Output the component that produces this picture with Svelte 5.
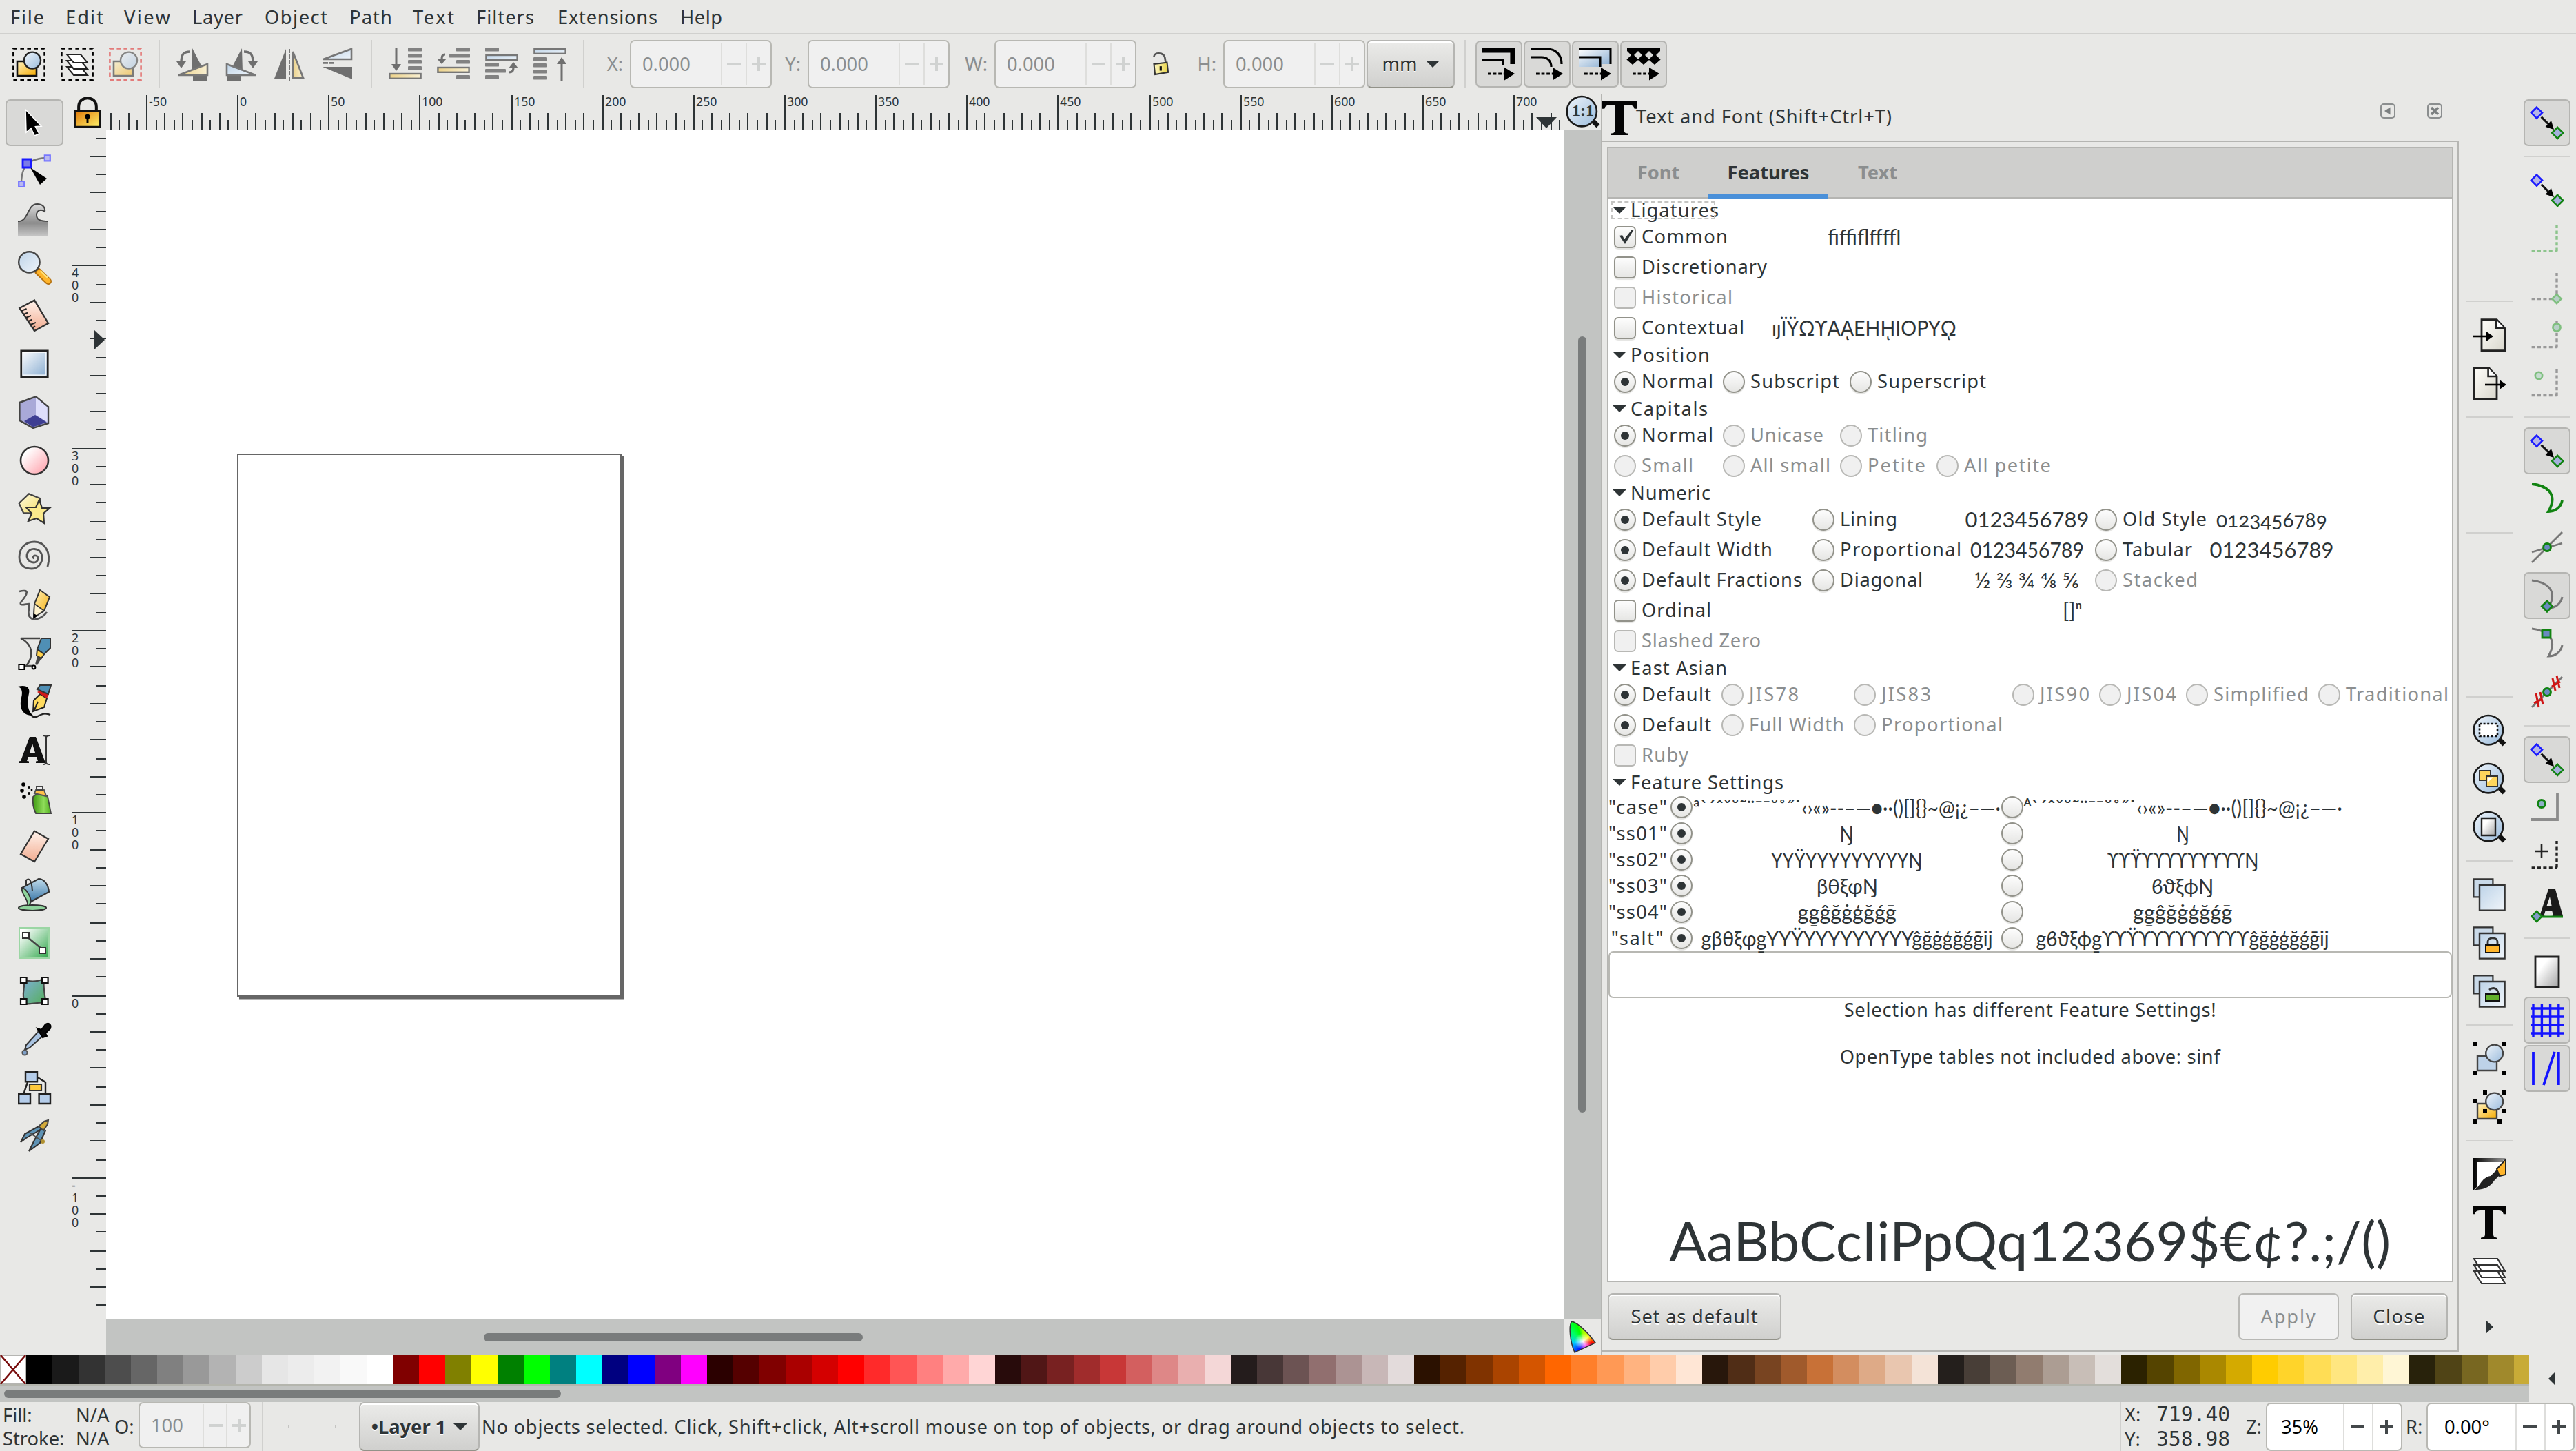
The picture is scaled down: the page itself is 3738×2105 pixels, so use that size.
<script>
  // Artwork for every toolbar glyph, on a 24-unit grid.
  const zoomBase =
    '<path d="M19 18l4 4" stroke="#111" stroke-width="3.4"/><circle cx="11.4" cy="11.6" r="10.6" fill="url(#g-blue)" stroke="#1a1a1a" stroke-width="1.3"/>';
  const dupBase =
    '<path d="M.7.7h14v13H.7z" fill="#c9d9e8" stroke="#333" stroke-width="1.1"/><path d="M5 5h18.3v18.3H5z" fill="url(#g-sky)" stroke="#333" stroke-width="1.2"/>';
  const snapBase =
    '<path d="M4.5 .8l4 4-4 4-4-4z" fill="#b5b5e6" stroke="#1a1aff" stroke-width="1.3"/><path d="M19.6 15.4l4 4-4 4-4-4z" fill="#a5b0dc" stroke="#118311" stroke-width="1.3"/><path d="M7.8 7.8l5 5" stroke="#111" stroke-width="1.5"/><path d="M17 17l-6.2-2L15 10.5z" fill="#000"/>';
  const dashCorner = (c) =>
    `<path d="M19 2v20M.8 20.8H19" stroke="${c}" stroke-width="1.7" stroke-dasharray="2.5 1.7" fill="none"/>`;
  const boxed = (c) =>
    `<rect x=".7" y=".7" width="22.6" height="22.6" fill="none" stroke="${c}" stroke-width="1.3" stroke-dasharray="2.8 2.2"/>`;
  const shapes =
    '<path d="M3.5 10h14v10.5h-14z" fill="url(#g-gold)" stroke="#111" stroke-width="1.3"/><circle cx="14.5" cy="9.3" r="6" fill="url(#g-blue)" stroke="#222" stroke-width="1.2"/>';
  const bars = (list) =>
    list.map(([x, y, w]) => `<rect x="${x}" y="${y}" width="${w}" height="2.8" rx=".6" fill="#828282"/>`).join('');
  const slab = (x, y, f) =>
    `<rect x="${x}" y="${y}" width="22.6" height="3.4" fill="${f}" stroke="#777" stroke-width="1.2"/>`;
  const arrowTail = '<path d="M4 19h12" stroke="#000" stroke-width="1.4" stroke-dasharray="2.4 1.4"/><path d="M16 14.4l7.5 4.6-7.5 4.8z"/>';
  const letterT = '<path d="M0 0h24v5.6h-1.6c-.5-2-1.7-2.6-4.4-2.6h-3V20c0 2 .7 2.6 3 2.8V24H6v-1.2c2.3-.2 3-.8 3-2.8V3H6C3.300 3 2.100 3.600 1.600 5.600H0z" fill="#050505"/>';

  const art = {
    selAll: boxed('#000') + shapes,
    selLayers: boxed('#000') + [14, 9.500, 5].map((y) => `<path d="M4.500 ${y}h10l5 6h-10z" fill="#fff" stroke="#222"/>`).join(''),
    deselect: `<g opacity=".5">${boxed('#e01010')}${shapes}</g>`,
    rotL: '<path d="M11.500.500L18 13l-7 5zM12 20h10v4H12z" fill="#6f6f6f"/><path d="M1.500 20L22.500 12v8z" fill="url(#g-cream)" stroke="#777" stroke-width="1.300"/><path d="M10 3C5 3 3.500 5 3.500 11" fill="none" stroke="#6f6f6f" stroke-width="1.700"/><path d="M0 10h7l-3.500 5z" fill="#6f6f6f"/>',
    rotR: '<path d="M12.500.500L6 13l7 5zM2 20h10v4H2z" fill="#6f6f6f"/><path d="M22.500 20L1.500 12v8z" fill="url(#g-sky)" stroke="#777" stroke-width="1.300"/><path d="M14 3c5 0 6.500 2 6.500 8" fill="none" stroke="#6f6f6f" stroke-width="1.700"/><path d="M24 10h-7l3.500 5z" fill="#6f6f6f"/>',
    flipH: '<path d="M9.500 1v21.500H1z" fill="#6f6f6f"/><path d="M14.500 3v19H22z" fill="url(#g-cream)" stroke="#777" stroke-width="1.300"/><path d="M12 1v23" stroke="#777" stroke-dasharray="3 1"/>',
    flipV: '<path d="M1.500 8.500H22V1z" fill="url(#g-sky)" stroke="#777" stroke-width="1.300"/><path d="M1 14h21.500v9z" fill="#6f6f6f"/><path d="M1 11.200h8" stroke="#777" stroke-width="1.400" stroke-dasharray="4 1"/>',
    bottom: bars([[14, 0, 10], [14, 4.500, 10], [14, 9, 10], [14, 13.500, 10]]) + slab(.700, 19, 'url(#g-cream)') + '<path d="M5.500.500V14" stroke="#6f6f6f" stroke-width="1.500"/><path d="M2 12h7l-3.500 5z" fill="#6f6f6f"/>',
    lower: bars([[14, 0, 10], [9, 4.500, 15], [14, 9, 10], [14, 20, 10]]) + slab(.700, 14.500, 'url(#g-cream)') + '<path d="M6 5C3.500 5 3.500 7 3.500 9" fill="none" stroke="#6f6f6f" stroke-width="1.600"/><path d="M0 8h7l-3.500 4z" fill="#6f6f6f"/>',
    raise: bars([[0, 0, 10], [0, 11, 10], [0, 15.500, 15], [0, 20, 10]]) + slab(.700, 5.500, 'url(#g-sky)') + '<path d="M17 18c3.500 0 3.500-2 3.500-4" fill="none" stroke="#6f6f6f" stroke-width="1.600"/><path d="M17 15h7l-3.500-4.500z" fill="#6f6f6f"/>',
    top: bars([[0, 7, 10], [0, 11.500, 10], [0, 16, 10], [0, 20.500, 10]]) + slab(.700, 1, 'url(#g-sky)') + '<path d="M20.500 10v14" stroke="#6f6f6f" stroke-width="1.500"/><path d="M17 12h7l-3.500-5z" fill="#6f6f6f"/>',
    unlock: '<path d="M6 5c0-4 9-4 10 1l1 6" fill="none" stroke="#555" stroke-width="1.700"/><path d="M6 12l12-1.500 1 9L7 21.500z" fill="url(#g-lemon)" stroke="#333" stroke-width="1.300"/><path d="M12.200 14v4" stroke="#111" stroke-width="2"/>',
    affStroke: '<path d="M0 2h22v10" fill="none" stroke="#000" stroke-width="3.600"/><path d="M0 9h15v4" fill="none" stroke="#000" stroke-width="1.500"/>' + arrowTail,
    affCorner: '<path d="M0 1h12c6 0 10.500 4 10.500 11M0 7h8c4.500 0 7 3 7 7" fill="none" stroke="#000" stroke-width="1.600"/>' + arrowTail,
    affGrad: '<path d="M0 1h23v11h-6v2H0z" fill="url(#g-steel)"/><path d="M0 1h23v11M0 7h15.500v7" fill="none" stroke="#000" stroke-width="1.500"/>' + arrowTail,
    affPat: '<path d="M0 0h24v2.500l-4 4-4-4-4 4-4-4-4 4-4-4z"/><path d="M4 4.500l4.300 4.300L4 12.500-.3 8.800zM12 4.500l4.300 4.300-4.300 3.700-4.300-3.700zM20 4.500l4.300 4.300-4.300 3.700-4.300-3.700z"/>' + arrowTail,
    arrow: '<path d="M5.500 2.500l11.500 12-4.300.400L15.500 20l-3.400 1.500L9.500 16 6 19z" fill="#000" stroke="#fff" stroke-width=".8"/>',
    node: '<path d="M2.500 21C2.500 10 6 3.500 20 2.500" fill="none" stroke="#777" stroke-width="1.200"/><path d="M3.500 3.500h6v6h-6z" fill="#7b7be8" stroke="#1a1aff" stroke-width="1.400"/><path d="M19.400.700h4v4h-4zM.600 19.500h4v4h-4z" fill="#b9b9f0" stroke="#7777ff" stroke-width="1.100"/><path d="M9 9.500L21 17.500l-5 4.500z" fill="#000"/>',
    tweak: '<path d="M0 13.500C8 14 6.500 1 14 1c4 0 6 2.500 5.500 5.500-3-2.500-6-.5-6 2.500 0 3.500 3 4.500 8.500 4.500V24H0z" fill="url(#g-grey)"/><path d="M0 13.500C8 14 6.500 1 14 1c4 0 6 2.500 5.500 5.500-3-2.500-6-.5-6 2.500 0 3.500 3 4.500 8.500 4.500" fill="none" stroke="#444"/>',
    zoom: '<path d="M14.500 14.800l7.500 7.200" stroke="#b5700c" stroke-width="5" stroke-linecap="round"/><path d="M15.500 15.500l6.500 6.300" stroke="#ffb52c" stroke-width="3.400" stroke-linecap="round"/><path d="M16.500 14.500l5 5" stroke="#ffe27a" stroke-width="1.200"/><circle cx="8.200" cy="8.200" r="7.600" fill="url(#g-sky)" stroke="#444" stroke-width="1.200"/>',
    measure: '<path d="M1.200 6.500L12 .800 22 17.500 12 23z" fill="url(#g-peach)" stroke="#333" stroke-width="1.200"/><path d="M2.500 8.500l3.800-1.600M4.200 11l2.800-1.200M5.800 13.500l3.800-1.600M7.500 16l2.800-1.200M9.200 18.500l3.800-1.600M10.600 20.700l2-1" stroke="#222"/>',
    rect: '<path d="M2.400 2.400h19.200v18.900H2.400z" fill="url(#g-steel)" stroke="#222" stroke-width="1.400"/><path d="M3.600 3.600h16.800v16.500H3.600z" fill="none" stroke="#fff" stroke-width=".6"/>',
    box3d: '<path d="M1.200 5L13 .700 22 8v12L11 23.500 1.200 18z" fill="#a9a9d8" stroke="#444" stroke-width="1.200"/><path d="M13 1.400l8.300 7v10.800L13 14z" fill="#dedefb"/><path d="M12.500 14l8.300 5.200-9.800 3.500-6.500-4.200z" fill="#3f3f93"/>',
    ellipse: '<circle cx="12" cy="12" r="10" fill="url(#g-pink)" stroke="#333" stroke-width="1.300"/>',
    star: '<path d="M.800 8L8 1.200l8 3.300.500 11L4 15z" fill="url(#g-star)" stroke="#444" stroke-width="1.100"/><path d="M15.500 5.500l2 6H23l-4.500 4 .5 7-5.500-3.500-6 2 2.500-5.500L6 11h7z" fill="#fbea8c" stroke="#333" stroke-width="1.100"/>',
    spiral: '<path d="M12 13c-1.500 0-1-2.500 1-2 3 .8 1.500 5-1.500 5-4 0-6-4-4.500-7 2-4 8-3.500 10 .500 2 5-1.500 11-7 11C4 20.500 1 17 1 12 1 5 6 1 12 1c7 0 12.500 7 9.500 18" fill="none" stroke="#555" stroke-width="1.400"/>',
    pencil: '<path d="M1 2c8-2 6 2 1 8-1 3 4 1 6 1 1 3-2 7 1 10 3 3 9 0 12-4" fill="none" stroke="#555" stroke-width="1.300"/><path d="M11.500 20.500L12 11l4-10 7 5-4 10z" fill="url(#g-gold)" stroke="#333"/><path d="M12 11l7 5-7.500 5z" fill="#fff3cf" stroke="#333" stroke-width=".8"/><path d="M11.300 22v-4l3 1.500z"/>',
    bezier: '<path d="M2 1h14M2 1c10 5 9 14 4 20h6" fill="none" stroke="#444" stroke-width="1.200"/><path d="M.700 20h4v3.500h-4z" fill="#fff" stroke="#000"/><circle cx="11.500" cy="22" r="1.200" fill="#fff" stroke="#000"/><path d="M17 1h6.500v7L19 12.500 14 9z" fill="#4f8fb5" stroke="#333"/><path d="M14 9l5 3.500-2 3-3.500-2z" fill="#ffd34d" stroke="#333"/><path d="M14 14l3 1.500-3 5-1.500-.5z" fill="#444"/>',
    calli: '<path d="M0 1c6-1.500 9 .5 8 5-1 5-2 12 3 16C2 22 1 15 2.500 9 3.500 5 3 2 0 1z"/><path d="M10 22.500c5 2.500 6-4 13.500-1" fill="none" stroke="#222" stroke-width="1.200"/><path d="M11 19l.5-8 4.500-4.500 5 3L19 16z" fill="#ffdb5e" stroke="#222"/><path d="M14 5l7 4.500 1.500-3-6-3z" fill="#d01818"/><path d="M14 3L16 0h8l-2 6.500z" fill="#4f8fb5" stroke="#333"/><path d="M11.500 19l3-7"  stroke="#222"/>',
    text: '<path d="M.500 21.500v-1.200L2 20 8.500 2.500h4.500L19.500 20l1.500.3v1.200h-8v-1.200l1.500-.3-1-3H7.500l-1 3 1.500.3v1.200zM8.500 14h4L10.500 7.500z" fill="#111"/><path d="M18 1.500c2 0 2.500.5 2.500 1.500v18c0 1-.5 1.500-2.500 1.500M23 1.500c-2 0-2.500.5-2.500 1.500v18c0 1 .5 1.500 2.500 1.500" stroke="#333" fill="none"/>',
    spray: '<path d="M11 11l3-2.500 7.500 2L24 23H13c-2-4-2.500-8-2-12z" fill="url(#g-green)" stroke="#444" stroke-width=".9"/><path d="M12 8.500l1-2.500h6l1.500 4.500z" fill="#ffc04a" stroke="#555"/><path d="M13.500 6V3.500H18V6z" fill="#eee" stroke="#444"/><circle cx="4" cy="2" r="1.400"/><circle cx="3" cy="6.500" r="1.400"/><circle cx="4.500" cy="11" r="1.400"/><circle cx="8" cy="4" r="1"/><circle cx="8" cy="8.500" r="1"/><circle cx="10" cy="6" r=".7"/>',
    eraser: '<path d="M12 .800l10 5.700L12 23 2 17.500z" fill="url(#g-peach)" stroke="#333" stroke-width="1.100"/>',
    bucket: '<ellipse cx="10.500" cy="21.500" rx="10" ry="2" fill="#8fd49c" stroke="#333" stroke-width="1.100"/><path d="M3 7l12-6.500c4 0 7 4 7.500 9.500l-13 7z" fill="url(#g-pail)" stroke="#333" stroke-width="1.100"/><path d="M3 7c2 0 6 5 6.500 10l-1.500 3H7c1-5-5-8-4-13z" fill="#8fd49c" stroke="#333" stroke-width=".9"/><path d="M6 6V1.500c2-2 4-.5 4.500 8" fill="none" stroke="#333"/>',
    gradient: '<path d="M1 1h21.500v22H1z" fill="url(#g-emerald)" stroke="#9bd6a4" stroke-width="1"/><path d="M6 7l11.500 9.500" stroke="#444" stroke-width="1.200"/><path d="M3.500 4.500h4.500v4H3.500zM15.500 15.500H20v4h-4.500z" fill="#fff" stroke="#333"/>',
    mesh: '<path d="M4 3c5 3 10 2 15 0-1 7 1 12 1 18-5-2-10 1-15 0C2 13 6 9 4 3z" fill="url(#g-mesh)" stroke="#444" stroke-width="1.100"/><path d="M2 2h4.300v4H2zM17.500 2h4.300v4h-4.300zM2 17.500h4.300v4H2zM17.500 17.500h4.300v4h-4.300z" fill="#fff" stroke="#111" stroke-width="1.100"/>',
    dropper: '<path d="M6 16l9-10 3 3.500L8.500 18 5 19.500z" fill="#a9c3e0" stroke="#333"/><path d="M14 4l3 1 3-4c2-1.500 4.500 0 3.500 3L20 7.500l1 2-3 1z" fill="#0a0a0a" stroke="#000"/><circle cx="5" cy="21.500" r="1.800" fill="#7fa0c8" stroke="#555"/>',
    connector: '<path d="M7 8l-3 9M13.500 4L20 8v9" fill="none" stroke="#222" stroke-width="1.200"/><path d="M5.500.600H14v7H5.500zM.600 16.500H9v7H.600zM15.300 16.500h8.200v7h-8.200z" fill="#b5cdea" stroke="#222" stroke-width="1.200"/><path d="M8.500 9.500h8.500v4.500H8.500z" fill="#ffc93c" stroke="#333" stroke-width="1.100"/>',
    lpe: '<path d="M2 16.500L5 10.500 15 5l2 2L6 13.500z" fill="#5f93b5" stroke="#333"/><path d="M8 23l4-8 5-9 3 2-4 9z" fill="#5f93b5" stroke="#333"/><path d="M15 5l4-3.500 3-1-.5 3-3 4.500z" fill="#d2a93a" stroke="#444"/><path d="M9 10l9 6" stroke="#555"/><circle cx="18" cy="16" r="1.500" fill="#b09030"/>',
    lock: '<path d="M5 12V8c0-9 14-9 14 0v4" fill="none" stroke="#111" stroke-width="2.200"/><path d="M2 11.500h20V24H2z" fill="url(#g-lock)" stroke="#111" stroke-width="1.400"/><circle cx="12" cy="16" r="1.900"/><path d="M11.200 16h1.600v5h-1.600z"/>',
    zoom11: zoomBase,
    import: '<path d="M6.500.800h11L23.300 7v16.300H6.500z" fill="url(#g-paper)" stroke="#222" stroke-width="1.400"/><path d="M17 1v6h6" fill="#fff" stroke="#222" stroke-width="1.300"/><path d="M0 13h11" stroke="#000" stroke-width="1.300"/><path d="M10 9.500l5 3.500-5 3.500z"/>',
    export: '<path d="M.800.800h11L17.500 7v16.300H.800z" fill="url(#g-paper)" stroke="#222" stroke-width="1.400"/><path d="M11.300 1v6h6" fill="#fff" stroke="#222" stroke-width="1.300"/><path d="M9 13h11" stroke="#000" stroke-width="1.300"/><path d="M19.500 9.500l5 3.500-5 3.500z"/>',
    zoomSel: zoomBase + '<path d="M5 7h13v9H5z" fill="#fff" stroke="#111" stroke-width="1.300" stroke-dasharray="1.500 1.300"/>',
    zoomDraw: zoomBase + '<path d="M5 6h8v7H5z" fill="#ffd65c" stroke="#333"/><path d="M10 10h8v7.500h-8z" fill="#ffd65c" stroke="#333"/><path d="M10.800 10.800h4l-4 4z" fill="#fff"/>',
    zoomPage: zoomBase + '<path d="M6.500 5.500h10v12.500h-10z" fill="url(#g-page)" stroke="#222" stroke-width="1.200"/>',
    dup: dupBase,
    clone: dupBase + '<path d="M11 14v-3c0-3.500 7-3.500 7 0v3" fill="none" stroke="#333" stroke-width="1.400"/><path d="M9.500 13.500h10V19h-10z" fill="#ffb52c" stroke="#111"/>',
    unclone: dupBase + '<path d="M12 11c3-2.500 6.500-1 6.500 3" fill="none" stroke="#333" stroke-width="1.400"/><path d="M9.500 14h10v5h-10z" fill="#62b02c" stroke="#111"/>',
    group: '<path d="M3.500 10h14v10.500h-14z" fill="#bdd2e8" stroke="#444" stroke-width="1.200"/><circle cx="15.800" cy="8" r="6.200" fill="url(#g-blue)" stroke="#444" stroke-width="1.200"/><path d="M0 0h3v3H0zM21 0h3v3h-3zM0 21h3v3H0zM21 21h3v3h-3z"/>',
    ungroup: '<path d="M3.500 9.500h14v11h-14z" fill="url(#g-gold)" stroke="#444" stroke-width="1.200"/><circle cx="15.800" cy="8" r="6.200" fill="url(#g-blue)" stroke="#444" stroke-width="1.200"/><path d="M0 6h3v3H0zM0 21h3v3H0zM7.500 0h3v3h-3zM21 0h3v3h-3zM21 13.500h3v3h-3zM18 21h3v3h-3zM7.500 13.500h3v3h-3z"/>',
    fill: '<path d="M0 0h24L0 24z" fill="url(#g-black)"/><path d="M3 3h19L8 19l-5 3z" fill="#fff"/><path d="M1 23c4-1 5-9 12-10l5-5 3 3-5 5c-4 6-9 7-15 7z" fill="#222"/><path d="M17.500 8l6.500-7v11l-4.500 1z" fill="#ffb52c" stroke="#222"/>',
    bigT: letterT,
    layers: '<g stroke="#333" stroke-width="1.100" fill="#fff"><path d="M1 12h17l5.500 9h-17zM1 7.500h17l5.500 9h-17zM1 3h17l5.500 9h-17z"/></g>',
    snap: snapBase,
    bbox: dashCorner('#8cc48c'),
    bboxEdge: dashCorner('#999') + '<path d="M19 17.500l3.300 3.300-3.300 3.300-3.300-3.300z" fill="#b8d0c8" stroke="#7fbf7f" stroke-width="1.300"/>',
    bboxMid: dashCorner('#999') + '<circle cx="19" cy="6.500" r="2.800" fill="#b8d0c8" stroke="#7fbf7f" stroke-width="1.300"/>',
    bboxCtr: dashCorner('#999') + '<circle cx="6" cy="6.500" r="2.600" fill="#c6dcd0" stroke="#7fbf7f" stroke-width="1.300"/>',
    path: '<path d="M1 1c9 1 20 6 12 20 5 0 9-3 10-8" fill="none" stroke="#118311" stroke-width="1.900"/>',
    cross: '<path d="M1 23L23 1M1 15.500l22-6.500" stroke="#777" stroke-width="1.400"/><circle cx="12" cy="12" r="2.700" fill="#6a8ac0" stroke="#118311" stroke-width="1.500"/>',
    cusp: '<path d="M1 1c9 1 20 6 12 20 5 0 9-3 10-8" fill="none" stroke="#777" stroke-width="1.500"/><path d="M12 16l3.800 3.800-3.800 3.800-3.800-3.800z" fill="#6a8ac0" stroke="#118311" stroke-width="1.400"/>',
    smooth: '<path d="M1 1c9 1 20 6 12 20 5 0 9-3 10-8" fill="none" stroke="#777" stroke-width="1.500"/><path d="M8.500 2h6v5.500h-6z" fill="#6a8ac0" stroke="#118311" stroke-width="1.400"/>',
    mid: '<path d="M1 23L23 1" stroke="#777" stroke-width="1.500"/><circle cx="12" cy="12" r="2.700" fill="#6a8ac0" stroke="#118311" stroke-width="1.500"/><path d="M4 13l2 10M7 12l2 9M16 2l2 9M19 0l2 9M2.500 20l6-3M15.500 8l6-3.500" stroke="#cf1515" stroke-width="1.500"/>',
    other: '<path d="M0 20.500h19.500V1" fill="none" stroke="#8c8c8c" stroke-width="1.900"/><circle cx="8" cy="9" r="2.700" fill="#8fb0c8" stroke="#118311" stroke-width="1.500"/>',
    rotC: '<path d="M19 1v20M.800 20.500H19" stroke="#222" stroke-width="1.700" stroke-dasharray="2.500 1.700"/><path d="M8 3v10M3 8.500h10" stroke="#222" stroke-width="1.300"/>',
    baseline: '<path d="M5 21l1.500-.3L13 1h5l5.500 19.500v1H15v-1l1.500-.3-.8-3.200h-5l-1 3.200 1.300.3v1H5zM11.800 13h3.500L14 6.500z" fill="#1a1a1a"/><path d="M5 21h18.500" stroke="#118311" stroke-width="1.400"/><path d="M4.500 17l3.700 3.700-3.700 3.700-3.700-3.700z" fill="#7f9ac8" stroke="#118311" stroke-width="1.300"/>',
    page: '<path d="M3.500 1h17v22h-17z" fill="url(#g-page)" stroke="#222" stroke-width="1.400"/>',
    grid: '<path d="M2 0v24M8.200 0v24M14.300 0v24M20.400 0v24M0 3.500h24M0 9.500h24M0 15.500h24M0 21.500h24" stroke="#1414ff" stroke-width="1.700"/>',
    guides: '<path d="M2 0v24M20.400 0v24M9.500 24L17.500 0" stroke="#1414ff" stroke-width="1.900"/>',
  };

  const menus = [['File', 49], ['Edit', 55], ['View', 67], ['Layer', 73], ['Object', 91], ['Path', 62], ['Text', 60], ['Filters', 84], ['Extensions', 145], ['Help', 61]];
  const menuSlots = [80, 85, 99, 105, 123, 92, 92, 118, 178, 90];
  const cmdGroups = [
    ['selAll', 'selLayers', 'deselect'],
    ['rotL', 'rotR', 'flipH', 'flipV'],
    ['bottom', 'lower', 'raise', 'top'],
  ];
  const tools = ['arrow', 'node', 'tweak', 'zoom', 'measure', 'rect', 'box3d', 'ellipse', 'star', 'spiral', 'pencil', 'bezier', 'calli', 'text', 'spray', 'eraser', 'bucket', 'gradient', 'mesh', 'dropper', 'connector', 'lpe'];
  const commands = ['gap4', '|', 'import', 'export', '|', 'gap2', '|', 'gap3', '|', 'zoomSel', 'zoomDraw', 'zoomPage', '|', 'dup', 'clone', 'unclone', '|', 'group', 'ungroup', '|', 'fill', 'bigT', 'layers'];
  const snaps = ['*snap', '|', 'snap', 'bbox', 'bboxEdge', 'bboxMid', 'bboxCtr', '|', '*snap', 'path', 'cross', '*cusp', 'smooth', 'mid', '|', '*snap', 'other', 'rotC', 'baseline', '|', 'page', '*grid', '*guides'];

  const palette = ('000 1a1a1a 333 4d4d4d 666 808080 999 b3b3b3 ccc e6e6e6 ececec f2f2f2 f9f9f9 fff ' +
    '800000 f00 808000 ff0 008000 0f0 008080 0ff 000080 00f 800080 f0f ' +
    '2b0000 550000 800000 a00 d40000 f00 ff2a2a f55 ff8080 faa ffd5d5 ' +
    '280b0b 501616 782121 a02c2c c83737 d35f5f de8787 e9afaf f4d7d7 ' +
    '241c1c 483737 6c5353 916f6f ac9393 c8b7b7 e3dbdb ' +
    '2b1100 552200 803300 a40 d45500 f60 ff7f2a f95 ffb380 fca ffe6d5 ' +
    '28170b 502d16 784421 a05a2c c87137 d38d5f deaa87 e9c6af f4e3d7 ' +
    '241f1c 483e37 6c5d53 917c6f ac9d93 c8beb7 e3dedb ' +
    '2b2200 554400 806600 a80 d4aa00 fc0 ffd42a fd5 ffe680 fea fff6d5 ' +
    '28220b 504416 786721 a0892c c8ab37').split(' ');

  const unit = 2.6457;
  const even = (n) => 2 * Math.floor(n / 2);
  const hTicks = [];
  for (let v = -70; v <= 725; v += 5) {
    hTicks.push({ v, x: even(191.2 + v * unit), len: v % 50 === 0 ? 50 : v % 10 === 0 ? 24 : 14, major: v % 50 === 0 });
  }
  const vTicks = [];
  for (let v = 470; v >= -170; v -= 10) {
    vTicks.push({ v, y: even(1256 - v * unit), len: v % 100 === 0 ? 50 : v % 20 === 0 ? 24 : 14, major: v % 100 === 0 });
  }

  // Set width of each label in the feature list.
  const widths = {
    Ligatures: 128, Common: 125, Discretionary: 182, Historical: 132, Contextual: 149,
    Position: 115, Normal: 104, Subscript: 129, Superscript: 158,
    Capitals: 112, Unicase: 106, Titling: 87, Small: 75, 'All small': 116, Petite: 84, 'All petite': 126,
    Numeric: 116, 'Default Style': 174, Lining: 83, 'Old Style': 122, 'Default Width': 190,
    Proportional: 176, Tabular: 101, 'Default Fractions': 233, Diagonal: 120, Stacked: 109,
    Ordinal: 101, 'Slashed Zero': 173, 'East Asian': 140, Default: 101, JIS78: 72, JIS83: 72,
    JIS90: 72, JIS04: 72, Simplified: 138, Traditional: 149, 'Full Width': 138, Ruby: 68,
    'Feature Settings': 222,
  };

  const features = [
    ['case', 'ªˋˊˆˇ˘˜¨¯ˉ˘˚˝˙‹›«»--–—●··()[]{}~@¡¿–—·', 446, 'ᴬˋˊˆˇ˘˜¨¯ˉ˘˚˝˙‹›«»--–—●··()[]{}~@¡¿–—·', 462],
    ['ss01', 'Ŋ', 20, 'Ŋ', 18],
    ['ss02', 'YΥŸYYYYYYYYYŊ', 220, 'ϒϒϔϒϒϒϒϒϒϒϒϒŊ', 219],
    ['ss03', 'βθξφŊ', 89, 'ϐϑξϕŊ', 90],
    ['ss04', 'gg̱ĝğġģğǵḡ', 143, 'gg̱ĝğġģğǵḡ', 144],
    ['salt', 'gβθξφg̱YYŸYYYYYYYYYĝğġģğǵḡij', 423, 'gϐϑξϕg̱ϒϒϔϒϒϒϒϒϒϒϒϒĝğġģğǵḡij', 425],
  ];

  function fit(node, width) {
    const natural = node.offsetWidth;
    if (natural) node.style.transform = `scaleX(${width / natural})`;
  }

  // Spaces the letters of a label so that it takes the given width.
  function track(node, width) {
    const n = node.textContent.length;
    if (!width || n < 2) return;
    const natural = node.getBoundingClientRect().width;
    node.style.letterSpacing = `${(width - natural) / (n - 1)}px`;
  }
</script>

{#snippet icon(name, size = 48)}
  <svg class="icon" width={size} height={size} viewBox="0 0 24 24" preserveAspectRatio="none">{@html art[name]}</svg>
{/snippet}

{#snippet spin(value, cls)}
  <div class="spin {cls}">
    <span class="val">{value}</span>
    <span class="step"><i class="minus"></i></span>
    <span class="step"><i class="minus"></i><i class="plus"></i></span>
  </div>
{/snippet}

{#snippet opt(label, kind = 'radio', on = false, off = false)}
  <span class="opt" class:off>
    <i class={kind}>
      {#if on && kind === 'radio'}<b></b>{/if}
      {#if on && kind === 'check'}<svg width="28" height="28" viewBox="0 0 28 28"><path d="M6 12l4-1 3 6L24 3h3L14 24z" fill="#2e3436" /></svg>{/if}
    </i>
    {#if label}<span class="txt" use:track={widths[label]}>{label}</span>{/if}
  </span>
{/snippet}

{#snippet head(label)}
  <div class="head"><i class="tri"></i><span class="txt" use:track={widths[label]}>{label}</span></div>
{/snippet}

{#snippet sample(text, width, cls = '')}
  <span class="sample {cls}"><span use:fit={width}>{text}</span></span>
{/snippet}

<svg class="defs" width="0" height="0">
  <defs>
    <linearGradient id="g-blue" x1="0" y1="0" x2="1" y2="1"><stop offset="0" stop-color="#eef4fa" /><stop offset="1" stop-color="#9dbddd" /></linearGradient>
    <linearGradient id="g-sky" x1="0" y1="0" x2="1" y2="1"><stop offset="0" stop-color="#bdd3e8" /><stop offset="1" stop-color="#f0f5fa" /></linearGradient>
    <linearGradient id="g-steel" x1="0" y1="0" x2="1" y2="1"><stop offset="0" stop-color="#fff" /><stop offset="1" stop-color="#86abd0" /></linearGradient>
    <linearGradient id="g-gold" x1="0" y1="0" x2="1" y2="1"><stop offset="0" stop-color="#fff2c0" /><stop offset="1" stop-color="#f5ab00" /></linearGradient>
    <linearGradient id="g-cream" x1="0" y1="0" x2="1" y2="0"><stop offset="0" stop-color="#ecd28a" /><stop offset="1" stop-color="#f8efd2" /></linearGradient>
    <linearGradient id="g-lemon" x1="0" y1="0" x2="1" y2="0"><stop offset="0" stop-color="#fff9c4" /><stop offset="1" stop-color="#e8d44a" /></linearGradient>
    <linearGradient id="g-lock" x1="0" y1="0" x2="1" y2="1"><stop offset="0" stop-color="#e07808" /><stop offset="1" stop-color="#fff36a" /></linearGradient>
    <linearGradient id="g-peach" x1="0" y1="0" x2="0" y2="1"><stop offset="0" stop-color="#fff3ec" /><stop offset="1" stop-color="#f2ac90" /></linearGradient>
    <linearGradient id="g-pink" x1="0" y1="0" x2="1" y2="1"><stop offset=".2" stop-color="#fff" /><stop offset="1" stop-color="#ff9aa5" /></linearGradient>
    <linearGradient id="g-star" x1="0" y1="0" x2="1" y2="1"><stop offset="0" stop-color="#fffbe0" /><stop offset="1" stop-color="#f2dc68" /></linearGradient>
    <linearGradient id="g-grey" x1="0" y1="0" x2="0" y2="1"><stop offset="0" stop-color="#ddd" /><stop offset=".6" stop-color="#8c8c8c" /><stop offset="1" stop-color="#c4c4c4" /></linearGradient>
    <linearGradient id="g-green"><stop offset="0" stop-color="#3f9a12" /><stop offset=".6" stop-color="#8fdc5a" /><stop offset="1" stop-color="#4fae1e" /></linearGradient>
    <linearGradient id="g-pail" x1="0" y1="0" x2="0" y2="1"><stop offset="0" stop-color="#bfdcec" /><stop offset="1" stop-color="#3d78a8" /></linearGradient>
    <linearGradient id="g-emerald" x1="0" y1="0" x2="1" y2="1"><stop offset=".1" stop-color="#fff" /><stop offset="1" stop-color="#2fa64a" /></linearGradient>
    <linearGradient id="g-mesh" x1="0" y1="0" x2="1" y2="1"><stop offset="0" stop-color="#7eb0d8" /><stop offset="1" stop-color="#55ae5a" /></linearGradient>
    <linearGradient id="g-paper" x1="0" y1="0" x2="1" y2="1"><stop offset="0" stop-color="#fffefa" /><stop offset="1" stop-color="#d9d7cd" /></linearGradient>
    <linearGradient id="g-page" x1="0" y1="0" x2="1" y2="1"><stop offset=".3" stop-color="#fff" /><stop offset="1" stop-color="#a5a5a5" /></linearGradient>
    <linearGradient id="g-black" x1="0" y1="0" x2="1" y2="0"><stop offset="0" stop-color="#000" /><stop offset="1" stop-color="#999" /></linearGradient>
  </defs>
</svg>

<div class="app">
  <nav class="menubar">
    {#each menus as [m, w], i}<div style:width={menuSlots[i] + 'px'}><span class="txt" use:track={w}>{m}</span></div>{/each}
  </nav>

  <div class="toolbar">
    {#each cmdGroups as g}
      {#each g as name}<span class="cell">{@render icon(name)}</span>{/each}
      <i class="vsep"></i>
    {/each}
    <span class="lab" style:width="53px">X:</span>{@render spin('0.000', 'dim')}
    <span class="lab" style:width="52px">Y:</span>{@render spin('0.000', 'dim')}
    <span class="lab" style:width="65px">W:</span>{@render spin('0.000', 'dim')}
    <span class="cell">{@render icon('unlock', 38)}</span>
    <span class="lab" style:width="56px">H:</span>{@render spin('0.000', 'dim')}
    <button class="btn unit">mm<i class="tri"></i></button>
    <i class="vsep"></i>
    {#each ['affStroke', 'affCorner', 'affGrad', 'affPat'] as name}
      <span class="cell"><span class="pressed">{@render icon(name)}</span></span>
    {/each}
  </div>

  <main>
    <aside class="toolbox">
      {#each tools as name, i}
        <span class="tool" class:sel={i === 0}>{@render icon(name)}</span>
      {/each}
    </aside>

    <section class="desk">
      <div class="corner">{@render icon('lock', 44)}</div>
      <svg class="hruler" width="2116" height="52">
        {#each hTicks as t}
          <rect x={t.x} y={52 - t.len} width="2" height={t.len} fill="#2e3436" />
          {#if t.major}<text x={t.x + 4} y="18">{t.v}</text>{/if}
        {/each}
        <path d="M2075 34h30l-15 16z" fill="#2e3436" />
      </svg>
      <div class="corner">{@render icon('zoom11', 49)}<span class="one">1:1</span></div>

      <svg class="vruler" width="54" height="1726">
        {#each vTicks as t}
          <rect x={54 - t.len} y={t.y} width={t.len} height="2" fill="#2e3436" />
          {#if t.major}
            {#each String(t.v) as ch, i}<text x="4" y={t.y + 18 + i * 18}>{ch}</text>{/each}
          {/if}
        {/each}
        <path d="M36 290v30l16-15z" fill="#2e3436" />
      </svg>
      <svg class="canvas" width="2116" height="1726">
        <path d="M193 1259.500h556V474" fill="none" stroke="#666" stroke-width="4" />
        <rect x="191" y="471" width="556" height="786" fill="#fff" stroke="#666" stroke-width="2" />
      </svg>
      <div class="vscroll"><i></i></div>

      <div></div>
      <div class="hscroll"><i></i></div>
      <div class="corner gamut">
        <svg width="44" height="48" viewBox="0 0 44 48">
          <foreignObject width="44" height="48"><div class="hue"></div></foreignObject>
          <path d="M6 1C1 6 3 30 10 46L40 32C32 20 16 4 6 1z" fill="none" stroke="#333" stroke-width="1.500" />
        </svg>
      </div>
    </section>

    <section class="dock">
      <header>
        {@render icon('bigT', 50)}<span class="title"><span class="txt" use:track={371}>Text and Font (Shift+Ctrl+T)</span></span>
        <svg width="22" height="22"><rect x="1" y="1" width="20" height="20" rx="4" fill="none" stroke="#8b8e8f" stroke-width="2" /><path d="M14.500 5.500v11L6 11z" fill="#7b7f80" /></svg>
        <svg class="x" width="22" height="22"><rect x="1" y="1" width="20" height="20" rx="4" fill="none" stroke="#8b8e8f" stroke-width="2" /><path d="M6 6l10 10M16 6L6 16" stroke="#7b7f80" stroke-width="3.500" /></svg>
      </header>
      <div class="frame">
        <div class="book">
          <div class="tabs"><span>Font</span><span class="on">Features</span><span>Text</span></div>
          <div class="pane">
            <div class="head"><i class="focus"></i><i class="tri"></i><span class="txt" use:track={widths.Ligatures}>Ligatures</span></div>
            <div class="row lig">{@render opt('Common', 'check', true)}{@render sample('fiffiflffffl', 106)}</div>
            <div class="row">{@render opt('Discretionary', 'check')}</div>
            <div class="row">{@render opt('Historical', 'check', false, true)}</div>
            <div class="row lig">{@render opt('Contextual', 'check')}{@render sample('ıȷÏŸΩϒAA\u0345EHH\u0345IOPYΩ\u0345', 268)}</div>
            {@render head('Position')}
            <div class="row pos">{@render opt('Normal', 'radio', true)}{@render opt('Subscript')}{@render opt('Superscript')}</div>
            {@render head('Capitals')}
            <div class="row cap">{@render opt('Normal', 'radio', true)}{@render opt('Unicase', 'radio', false, true)}{@render opt('Titling', 'radio', false, true)}</div>
            <div class="row cap">{@render opt('Small', 'radio', false, true)}{@render opt('All small', 'radio', false, true)}{@render opt('Petite', 'radio', false, true)}{@render opt('All petite', 'radio', false, true)}</div>
            {@render head('Numeric')}
            <div class="row num">{@render opt('Default Style', 'radio', true)}{@render opt('Lining')}{@render sample('0123456789', 180)}{@render opt('Old Style')}{@render sample('0123456789', 161, 'old')}</div>
            <div class="row num">{@render opt('Default Width', 'radio', true)}{@render opt('Proportional')}{@render sample('0123456789', 165)}{@render opt('Tabular')}{@render sample('0123456789', 180)}</div>
            <div class="row num">{@render opt('Default Fractions', 'radio', true)}{@render opt('Diagonal')}{@render sample('½ ⅔ ¾ ⅘ ⅚', 152)}{@render opt('Stacked', 'radio', false, true)}</div>
            <div class="row num">{@render opt('Ordinal', 'check')}<span></span>{@render sample('[]ⁿ', 28, 'ord')}</div>
            <div class="row">{@render opt('Slashed Zero', 'check', false, true)}</div>
            {@render head('East Asian')}
            <div class="row east">{@render opt('Default', 'radio', true)}{#each ['JIS78', 'JIS83', 'JIS90', 'JIS04', 'Simplified', 'Traditional'] as l}{@render opt(l, 'radio', false, true)}{/each}</div>
            <div class="row east">{@render opt('Default', 'radio', true)}{@render opt('Full Width', 'radio', false, true)}{@render opt('Proportional', 'radio', false, true)}</div>
            <div class="row">{@render opt('Ruby', 'check', false, true)}</div>
            {@render head('Feature Settings')}
            {#each features as [tag, a, wa, b, wb]}
              <div class="feat">
                <span class="tag"><span class="txt" use:track={tag === 'salt' ? 76 : 85}>"{tag}"</span></span>
                {@render opt('', 'radio', true)}{@render sample(a, wa)}
                {@render opt('')}{@render sample(b, wb)}
              </div>
            {/each}
            <div class="entry"></div>
            <div class="note"><span class="txt" use:track={540}>Selection has different Feature Settings!</span></div>
            <div class="note two"><span class="txt" use:track={552}>OpenType tables not included above: sinf</span></div>
            <div class="preview"><span use:fit={1047}>AaBbCcIiPpQq12369$€¢?.;/()</span></div>
          </div>
        </div>
        <footer>
          <button class="btn set"><span class="txt" use:track={184}>Set as default</span></button>
          <span class="grow"></span>
          <button class="btn apply"><span class="txt" use:track={79}>Apply</span></button>
          <button class="btn close"><span class="txt" use:track={75}>Close</span></button>
        </footer>
      </div>
    </section>

    <aside class="side cmds">
      {#each commands as c}
        {#if c === '|'}<i class="hsep"></i>
        {:else if c.startsWith('gap')}<span class={c}></span>
        {:else}<span class="cell">{@render icon(c)}</span>{/if}
      {/each}
      <i class="more"></i>
    </aside>
    <aside class="side">
      {#each snaps as c}
        {#if c === '|'}<i class="hsep"></i>
        {:else if c[0] === '*'}<span class="cell"><span class="pressed">{@render icon(c.slice(1))}</span></span>
        {:else}<span class="cell">{@render icon(c)}</span>{/if}
      {/each}
    </aside>
  </main>

  <div class="palrow">
    <div class="palwrap">
      <div class="palette">
        <svg width="38" height="42" viewBox="0 0 38 42"><path d="M0 0h38v42H0z" fill="#fff" stroke="#b5b5b2" stroke-width="2" /><path d="M1 0l36 42M37 0L1 42" stroke="#780c0c" stroke-width="2.500" /></svg>
        {#each palette as c}<i style:background={'#' + c}></i>{/each}
      </div>
      <div class="palscroll"><i></i></div>
    </div>
    <i class="back"></i>
  </div>

  <footer class="status">
    <div class="style"><span>Fill:</span><span>N/A</span><span>Stroke:</span><span>N/A</span></div>
    <span class="o">O:</span>{@render spin('100', 'dim op')}
    <i class="line"></i>
    <span class="dots"><i></i><i></i></span>
    <button class="btn layer">•Layer 1<i class="tri"></i></button>
    <span class="msg"><span class="txt" use:track={1426}>No objects selected. Click, Shift+click, Alt+scroll mouse on top of objects, or drag around objects to select.</span></span>
    <div class="coords"><span>X:</span><b>719.40</b><span>Y:</span><b>358.98</b></div>
    <span class="zl">Z:</span>{@render spin('35%', 'live z')}
    <span class="rl">R:</span>{@render spin('0.00°', 'live r')}
  </footer>
</div>

<style>
  :global(body) { margin: 0; overflow: hidden; background: #e8e8e6; }
  .defs { position: absolute; }
  .app {
    width: 3738px; height: 2105px; display: flex; flex-direction: column; overflow: hidden;
    background: #e8e8e6; color: #2e3436;
    font: 27.3px/34px "Noto Sans", "DejaVu Sans", sans-serif; white-space: nowrap;
  }
  .app * { box-sizing: border-box; }
  .txt { display: inline-block; flex: none; }
  .icon { display: block; overflow: visible; flex: none; }
  .tri { width: 0; height: 0; border: 10px solid transparent; border-top: 10px solid #2e3436; border-bottom: 0; flex: none; }

  .menubar { height: 50px; flex: none; border-bottom: 2px solid #d0d0ce; padding: 2px 0 0 15px; display: flex; align-items: center; }
  .toolbar { height: 86px; flex: none; padding: 0 0 1px 7px; display: flex; align-items: center; }
  .cell { width: 70px; height: 70px; flex: none; display: flex; align-items: center; justify-content: center; }
  .pressed { width: 68px; height: 68px; border: 2px solid #b5b5b2; border-radius: 7px; background: #d9d9d7; display: flex; align-items: center; justify-content: center; }
  .vsep { width: 28px; height: 70px; flex: none; background: linear-gradient(#d0d0ce, #d0d0ce) center / 2px 100% no-repeat; }
  .lab { flex: none; text-align: right; padding-right: 10px; color: #8b8e8f; }

  .spin { width: 206px; height: 70px; flex: none; border: 2px solid #b8b8b3; border-radius: 7px; display: flex; background: #f0f0f0; color: #8b8e8f; align-items: center; }
  .spin .val { flex: 1; padding-left: 16px; }
  .step { width: 36px; height: 62px; border-left: 2px solid #dededc; position: relative; color: #d0d2d1; }
  .minus { position: absolute; left: 7px; top: 29px; width: 20px; height: 4px; background: currentColor; }
  .plus { position: absolute; left: 15px; top: 21px; width: 4px; height: 20px; background: currentColor; }
  .live { background: #fff; color: #000; }
  .live .step { width: 42px; height: 66px; color: #43484a; }
  .live .minus { left: 9px; top: 31px; }
  .live .plus { left: 17px; top: 23px; }
  .dim.op { width: 163px; height: 67px; align-self: flex-start; }
  .op .step { width: 34px; }
  .spin.z { width: 198px; }
  .spin.r { width: 215px; }
  .r .val { padding-left: 24px; }
  .z .val { padding-left: 20px; }

  .btn {
    font: inherit; color: inherit; margin: 0; padding: 0; flex: none; display: flex; align-items: center; justify-content: center;
    border: 2px solid #b5b5b2; border-bottom-color: #929289; border-radius: 7px;
    background: linear-gradient(#ebebe9, #d0d0ce); box-shadow: inset 0 2px #fff; text-shadow: 0 2px #fff;
  }
  .unit { width: 128px; height: 70px; gap: 12px; margin: 0 1px 0 2px; }

  main { height: 1830px; flex: none; display: flex; }
  .toolbox { width: 100px; padding: 7px 0 0 8px; }
  .tool { width: 84px; height: 70px; display: flex; align-items: center; justify-content: center; }
  .tool.sel { height: 68px; margin: 1px 0; border: 2px solid #b5b5b2; border-radius: 7px; background: #d9d9d7; }

  .desk { width: 2223px; display: grid; grid-template-columns: 54px 2116px 53px; grid-template-rows: 52px 1726px 52px; }
  .corner { display: flex; align-items: center; justify-content: center; position: relative; }
  .one { position: absolute; left: 11px; top: 8px; font: bold 24px/32px "Liberation Serif", serif; }
  .hruler, .vruler { display: block; font-size: 17.8px; fill: #2e3436; overflow: hidden; }
  .canvas { display: block; background: #fff; }
  .vscroll { background: #c2c4c2; padding: 300px 0 0 20px; }
  .vscroll i { display: block; width: 12px; height: 1126px; border-radius: 6px; background: #797c7c; }
  .hscroll { background: #c2c4c2; padding: 20px 0 0 548px; }
  .hscroll i { display: block; width: 550px; height: 12px; border-radius: 6px; background: #797c7c; }
  .hue { width: 44px; height: 48px; clip-path: polygon(14% 2%, 8% 12%, 9% 50%, 22% 96%, 91% 67%, 60% 35%, 30% 8%); background: radial-gradient(circle at 22px 30px, #fff 0, transparent 12px), conic-gradient(from 0deg at 22px 30px, #9f0, #ff0 50deg, #f00 100deg, #f0f 150deg, #00f 200deg, #0cf 260deg, #0f6 310deg, #0f0 340deg, #9f0); }

  .dock { width: 1245px; flex: none; border-left: 2px solid #b5b5b2; display: flex; flex-direction: column; }
  .dock header { height: 68px; display: flex; align-items: center; padding-top: 1px; flex: none; }
  .dock header .title { flex: 1; margin: -4px 0 0 -1px; }
  .dock header svg.x { margin: -19px 24px 0 46px; }
  .dock header > svg:not(.icon):not(.x) { margin-top: -19px; }
  .frame { height: 1758px; border: 2px solid #b5b5b2; border-left: 0; border-bottom-width: 4px; display: flex; flex-direction: column; padding: 7px 6px 0 7px; }
  .book { height: 1647px; border: 2px solid #b5b5b2; display: flex; flex-direction: column; flex: none; }
  .tabs { height: 73px; flex: none; background: #cfcfcd; border-bottom: 2px solid #b5b5b2; display: flex; font-weight: bold; color: #8b8e8f; }
  .tabs span { height: 73px; line-height: 69px; width: 145px; text-align: center; }
  .tabs .on { width: 174px; color: #2e3436; border-bottom: 6px solid #4a90d9; }
  .tabs span:last-child { width: 143px; }
  .pane { flex: 1; background: #fff; display: flex; flex-direction: column; overflow: hidden; }
  .head { height: 34px; line-height: 34px; flex: none; padding-left: 6px; display: flex; align-items: center; gap: 6px; position: relative; }
  .focus { position: absolute; left: 4px; top: 4px; width: 151px; height: 26px; border: 2px dashed #c4c4c2; }
  .row { height: 44px; flex: none; padding-left: 8px; display: grid; align-items: center; }
  .lig { grid-template-columns: 219px 288px; }
  .pos { grid-template-columns: 158px 184px auto; }
  .cap { grid-template-columns: 158px 170px 140px auto; }
  .num { grid-template-columns: 288px 212px 198px 161px 191px; }
  .east { grid-template-columns: 156px 192px 230px 126px 126px 192px auto; }
  .opt { display: flex; align-items: center; gap: 8px; height: 32px; min-width: 0; }
  .opt .txt { margin-top: -2px; }
  .opt.off { color: #8b8e8f; }
  .radio, .check { width: 32px; height: 32px; flex: none; border: 2px solid #92928a; border-radius: 50%; background: linear-gradient(#fdfdfd, #e6e6e4); display: flex; align-items: center; justify-content: center; box-shadow: 0 2px 1px #e4e4e2; }
  .check { border-radius: 6px; }
  .off .radio, .off .check { border-color: #b8b8b5; background: #f0f0f0; box-shadow: none; }
  .radio b { width: 12px; height: 12px; border-radius: 50%; background: #2e3436; }
  .sample { display: flex; justify-content: center; min-width: 0; margin-top: -3px; font: 30.5px/34px Lato, "Noto Sans", "DejaVu Sans", sans-serif; }
  .sample span { flex: none; transform-origin: center; }
  .old { font-variant-numeric: oldstyle-nums; }
  .ord { justify-content: flex-end; padding-right: 19px; }
  .feat { height: 38px; flex: none; display: grid; grid-template-columns: 90px 32px 448px 32px 463px; align-items: center; }
  .feat .sample { margin-top: -1px; }
  .tag { text-align: center; padding-right: 5px; }
  .entry { height: 68px; flex: none; border: 2px solid #b8b8b3; border-radius: 7px; }
  .note { height: 34px; text-align: center; flex: none; }
  .note.two { margin-top: 34px; }
  .preview { margin-top: auto; height: 119px; display: flex; justify-content: center; font: 80px/120px Lato, sans-serif; }
  .preview span { flex: none; }
  .frame footer { display: flex; padding: 16px 8px 0 1px; }
  .grow { flex: 1; }
  .frame .btn { height: 68px; }
  .set { width: 252px; }
  .apply { width: 146px; margin-right: 17px; color: #8b8e8f; background: #f1f1f1; border-color: #b8b8b5; box-shadow: none; text-shadow: none; }
  .close { width: 141px; }

  .side { width: 84px; padding-top: 7px; display: flex; flex-direction: column; align-items: center; flex: none; }
  .side.cmds { width: 86px; padding-left: 2px; }
  .hsep { width: 68px; height: 28px; flex: none; background: linear-gradient(#d0d0ce, #d0d0ce) center / 100% 2px no-repeat; }
  .gap2 { height: 140px; } .gap3 { height: 210px; } .gap4 { height: 280px; }
  .more { margin-top: 36px; border: 10px solid transparent; border-left: 11px solid #2e3436; border-right: 0; }

  .palrow { height: 68px; flex: none; display: flex; }
  .palwrap { width: 3670px; }
  .palette { height: 42px; display: flex; overflow: hidden; }
  .palette svg, .palette i { width: 38px; height: 42px; flex: none; }
  .palscroll { height: 26px; background: #c2c4c2; border-top: 2px solid #b4b5ad; padding: 6px 0 0 6px; }
  .palscroll i { display: block; width: 808px; height: 12px; border-radius: 6px; background: #797c7c; }
  .back { margin: 24px 0 0 28px; align-self: flex-start; border: 10px solid transparent; border-right: 10px solid #2e3436; border-left: 0; }

  .status { height: 71px; flex: none; display: flex; align-items: center; }
  .style { width: 166px; padding-left: 4px; display: grid; grid-template-columns: 106px auto; }
  .o { width: 35px; }
  .line { width: 2px; height: 71px; margin: 0 36px 0 16px; background: #d0d0ce; }
  .dots { width: 103px; display: flex; gap: 66px; }
  .dots i { width: 2px; height: 4px; background: #c4c4c2; }
  .layer { width: 175px; height: 71px; font-weight: bold; gap: 11px; margin-right: 3px; }
  .msg { width: 2377px; }
  .coords { height: 71px; width: 183px; border-left: 2px solid #d0d0ce; padding-left: 5px; display: grid; grid-template-columns: 46px auto; line-height: 35px; }
  .coords b { font: 29.7px/35px "DejaVu Sans Mono", monospace; }
  .zl { width: 29px; } .rl { width: 35px; padding-left: 5px; }
</style>
